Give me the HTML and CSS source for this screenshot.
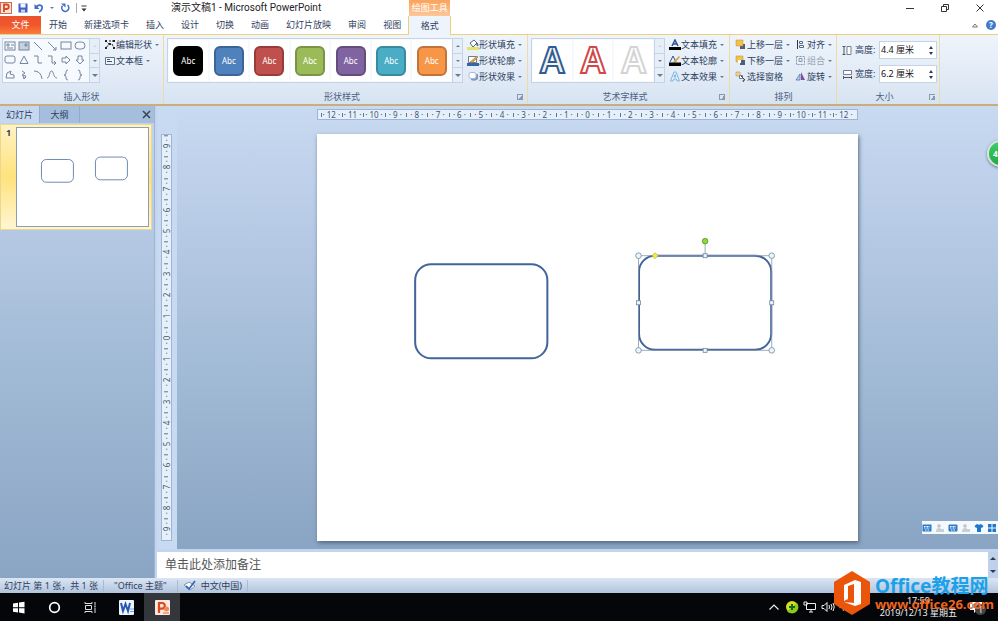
FILE: index.html
```
<!DOCTYPE html>
<html lang="zh-CN">
<head>
    <meta charset="UTF-8">
    <meta name="viewport" content="width=device-width, initial-scale=1.0">
    <title>演示文稿1 - Microsoft PowerPoint</title>
    <link rel="stylesheet" href="styles.css">
</head>
<body>

<header class="titlebar">
    <div class="quick-access">
        <svg class="app-logo" width="12" height="12" viewBox="0 0 12 12"><rect x="0.5" y="0.5" width="11" height="11" fill="#fbe3d8" stroke="#d9694a"/><path d="M4 10V2.5h2.5a2 2 0 0 1 0 4.500H4" fill="none" stroke="#d24a26" stroke-width="1.8"/></svg>
        <button aria-label="保存"><svg width="10" height="10" viewBox="0 0 10 10"><path d="M0.500 0.500h9v9h-9z" fill="#3f5fc4"/><path d="M2.500 0.500h5v4h-5z" fill="#f4f7ff"/><path d="M3 6.500h4v3H3z" fill="#c4d0f0"/></svg></button>
        <button aria-label="撤消"><svg width="10" height="10" viewBox="0 0 10 10"><path d="M2 4C5 1 9 2 8 5.500Q7.500 8 5 9" fill="none" stroke="#3f6fc8" stroke-width="1.800"/><path d="M0.500 1v5h5z" fill="#3f6fc8"/></svg></button>
        <span class="caret"></span>
        <button aria-label="重复"><svg width="10" height="10" viewBox="0 0 10 10"><path d="M7.500 2.200A3.500 3.500 0 1 1 2.500 2.800" fill="none" stroke="#3f6fc8" stroke-width="1.600"/><path d="M1 0.500h4.500v4z" fill="#3f6fc8"/></svg></button>
        <span class="divider"></span>
        <button aria-label="自定义快速访问工具栏"><svg width="6" height="7" viewBox="0 0 6 7"><path d="M0.500 1h5" stroke="#333"/><path d="M0.500 3.500h5L3 6.500z" fill="#333"/></svg></button>
    </div>
    <h1>演示文稿1 - Microsoft PowerPoint</h1>
    <div class="window-buttons">
        <button aria-label="最小化"><svg width="10" height="10" viewBox="0 0 10 10"><path d="M1 5.500h8" stroke="#333"/></svg></button>
        <button aria-label="还原"><svg width="10" height="10" viewBox="0 0 10 10"><path d="M1.500 3.500h5v5h-5zM3.500 3V1.500h5v5H7" fill="none" stroke="#333"/></svg></button>
        <button aria-label="关闭"><svg width="10" height="10" viewBox="0 0 10 10"><path d="M1.500 1.500l7 7m0-7l-7 7" stroke="#333"/></svg></button>
    </div>
</header>

<nav class="tabs">
    <button class="file-tab">文件</button>
    <button>开始</button>
    <button>新建选项卡</button>
    <button>插入</button>
    <button>设计</button>
    <button>切换</button>
    <button>动画</button>
    <button>幻灯片放映</button>
    <button>审阅</button>
    <button>视图</button>
    <div class="context-tab">
        <span class="context-title">绘图工具</span>
        <button>格式</button>
    </div>
    <div class="tab-tools">
        <button aria-label="功能区最小化"><svg width="6" height="5" viewBox="0 0 6 5"><path d="M0.500 4L3 1l2.500 3z" fill="none" stroke="#777"/></svg></button>
        <button class="help" aria-label="帮助">?</button>
    </div>
</nav>

<section class="ribbon">
    <div class="group insert-group">
        <div class="group-body">
            <div class="gallery">
                <div class="shape-grid">
                    <svg viewBox="0 0 12 12"><rect x="1" y="2" width="10" height="8"/><path d="M3 4h2v2H3zM7 5h3M3 8h6"/></svg>
                    <svg viewBox="0 0 12 12"><rect x="1" y="2" width="10" height="8" fill="#c8d2df"/><path d="M7 4h2v2H7z"/></svg>
                    <svg viewBox="0 0 12 12"><path d="M2 2l8 8"/></svg>
                    <svg viewBox="0 0 12 12"><path d="M2 2l8 8M10 7v3H7"/></svg>
                    <svg viewBox="0 0 12 12"><rect x="1" y="2" width="10" height="7"/></svg>
                    <svg viewBox="0 0 12 12"><rect x="1" y="2" width="10" height="7" rx="3.500"/></svg>
                    <svg viewBox="0 0 12 12"><rect x="1" y="2" width="10" height="7" rx="2"/></svg>
                    <svg viewBox="0 0 12 12"><path d="M6 2l4 7.500H2z"/></svg>
                    <svg viewBox="0 0 12 12"><path d="M2 2h4v7h4"/></svg>
                    <svg viewBox="0 0 12 12"><path d="M2 2h4v7h4M8 7l2 2-2 2"/></svg>
                    <svg viewBox="0 0 12 12"><path d="M2 4h4V2l4 4-4 4V8H2z"/></svg>
                    <svg viewBox="0 0 12 12"><path d="M4 2h4v4h2l-4 4-4-4h2z"/></svg>
                    <svg viewBox="0 0 12 12"><path d="M2 9l1-5 4-2-1 3 4 1v3z"/></svg>
                    <svg viewBox="0 0 12 12"><path d="M4 2l3 2-3 2 4 1-2 3M8 8l-2 2-1-3"/></svg>
                    <svg viewBox="0 0 12 12"><path d="M2 2q7 0 8 8"/></svg>
                    <svg viewBox="0 0 12 12"><path d="M1 9C4 9 3 2 5.500 2S7 9 11 9"/></svg>
                    <svg viewBox="0 0 12 12"><path d="M8 1Q6 1 6 3v1q0 2-2 2 2 0 2 2v1q0 2 2 2"/></svg>
                    <svg viewBox="0 0 12 12"><path d="M4 1q2 0 2 2v1q0 2 2 2-2 0-2 2v1q0 2-2 2"/></svg>
                </div>
                <div class="gallery-scroll"><button class="off" aria-label="上一行"></button><button aria-label="下一行"></button><button class="more" aria-label="其他"></button></div>
            </div>
            <div class="commands">
                <button><svg width="12" height="11" viewBox="0 0 12 11"><path d="M2 2l3 3-3 4M5 2h5M8 5l2 4" stroke="#222" fill="none" stroke-dasharray="2 1"/><path d="M1 1h2v2H1zM9 1h2v2H9zM1 8h2v2H1zM9 8h2v2H9zM5 4h2v2H5z" fill="#222"/></svg>编辑形状<span class="caret"></span></button>
                <button><svg width="12" height="11" viewBox="0 0 12 11"><path d="M1.500 2.500h9v7h-9z" fill="#eef4fb" stroke="#61748e"/><path d="M3 4.500h3M3 6.500h5" stroke="#42556e"/></svg>文本框<span class="caret"></span></button>
            </div>
        </div>
        <footer><span>插入形状</span></footer>
    </div>

    <div class="group style-group">
        <div class="group-body">
            <div class="gallery">
                <div class="swatches">
                    <button class="black"><span>Abc</span></button>
                    <button class="blue"><span>Abc</span></button>
                    <button class="red"><span>Abc</span></button>
                    <button class="green"><span>Abc</span></button>
                    <button class="purple"><span>Abc</span></button>
                    <button class="teal"><span>Abc</span></button>
                    <button class="orange"><span>Abc</span></button>
                </div>
                <div class="gallery-scroll"><button aria-label="上一行"></button><button aria-label="下一行"></button><button class="more" aria-label="其他"></button></div>
            </div>
            <div class="commands">
                <button><svg width="12" height="11" viewBox="0 0 12 11"><path d="M3 4l4-3 3 3-4 4z" fill="#fff" stroke="#52657f"/><path d="M9 4q2 1 1.500 3" stroke="#3565ad" stroke-width="1.500" fill="none"/><path d="M0 8h12v3H0z" fill="#e4e26a"/></svg>形状填充<span class="caret"></span></button>
                <button><svg width="12" height="11" viewBox="0 0 12 11"><path d="M1.500 1.500h8v6h-8z" fill="#fff" stroke="#6e7f95"/><path d="M3 7l7-6 1 1-6 6z" fill="#e3a33a" stroke="#9c6a22" stroke-width="0.500"/><path d="M0 8h12v3H0z" fill="#3565ad"/></svg>形状轮廓<span class="caret"></span></button>
                <button><svg width="12" height="11" viewBox="0 0 12 11"><path d="M4 3h7v5q-3 3-7 1z" fill="#7f94c6"/><rect x="2" y="1.500" width="7" height="6" rx="2" fill="#fff" stroke="#a9bbd8"/></svg>形状效果<span class="caret"></span></button>
            </div>
        </div>
        <footer><span>形状样式</span><button class="launcher" aria-label="设置形状格式"></button></footer>
    </div>

    <div class="group wordart-group">
        <div class="group-body">
            <div class="gallery">
                <div class="letters">
                    <button class="letter-blue">A</button>
                    <button class="letter-red">A</button>
                    <button class="letter-white">A</button>
                </div>
                <div class="gallery-scroll"><button class="off" aria-label="上一行"></button><button aria-label="下一行"></button><button class="more" aria-label="其他"></button></div>
            </div>
            <div class="commands">
                <button><svg width="12" height="11" viewBox="0 0 12 11"><path d="M3 7l3-6 3 6M4 5h4" fill="none" stroke="#2d5190" stroke-width="1.500"/><path d="M0 8h12v3H0z" fill="#000"/></svg>文本填充<span class="caret"></span></button>
                <button><svg width="12" height="11" viewBox="0 0 12 11"><path d="M1 7l3-6 3 6" fill="none" stroke="#2d5190"/><path d="M4 7l6-6 1 1-5 6z" fill="#d9a23b"/><path d="M0 7.500h12V11H0z" fill="#000"/></svg>文本轮廓<span class="caret"></span></button>
                <button><svg width="12" height="11" viewBox="0 0 12 11"><path d="M1.500 10L5 1h2l3.500 9H8L7.500 8h-3L4 10zM5 6h2L6 3.500z" fill="#e6f4fd" stroke="#7fb4df"/></svg>文本效果<span class="caret"></span></button>
            </div>
        </div>
        <footer><span>艺术字样式</span><button class="launcher" aria-label="设置文本效果格式"></button></footer>
    </div>

    <div class="group arrange-group">
        <div class="group-body">
            <div class="commands">
                <button><svg width="12" height="11" viewBox="0 0 12 11"><path d="M5 5h5v5H5z" fill="#4f5d78"/><path d="M1 1h7v6H1z" fill="#f2c14e" stroke="#c48f2a" stroke-width="0.500"/></svg>上移一层<span class="caret"></span></button>
                <button><svg width="12" height="11" viewBox="0 0 12 11"><path d="M1 1h7v6H1z" fill="#f2c14e" stroke="#c48f2a" stroke-width="0.500"/><path d="M5 5h5v5H5z" fill="#4f5d78"/><path d="M3 5h3v3H3z" fill="#fff"/></svg>下移一层<span class="caret"></span></button>
                <button><svg width="12" height="11" viewBox="0 0 12 11"><path d="M1 1h4v4H1z" fill="#f2d48e" stroke="#a48442" stroke-width="0.500"/><path d="M4.500 4.500h3v3h-3z" fill="#fff" stroke="#68788f"/><path d="M6 5l4 4-2 .3.500 1.700" fill="none" stroke="#445"/></svg>选择窗格</button>
            </div>
            <div class="commands">
                <button><svg width="12" height="11" viewBox="0 0 12 11"><path d="M2.500 1v9" stroke="#333"/><path d="M4.500 2.500h3v2h-3zM4.500 6.500h4v2h-4z" fill="#fff" stroke="#556a8a"/></svg>对齐<span class="caret"></span></button>
                <button class="disabled"><svg width="12" height="11" viewBox="0 0 12 11"><path d="M1.500 1.500h8v8h-8z" fill="none" stroke="#8796ab" stroke-dasharray="2 1"/><path d="M4 3.500h3v3H4z" fill="none" stroke="#8796ab"/></svg>组合<span class="caret"></span></button>
                <button><svg width="12" height="11" viewBox="0 0 12 11"><path d="M1 9h4V3z" fill="#bcd1ec" stroke="#5573a3" stroke-width="0.800"/><path d="M6 9h4L6 1z" fill="#7c4fa0"/></svg>旋转<span class="caret"></span></button>
            </div>
        </div>
        <footer><span>排列</span></footer>
    </div>

    <div class="group size-group">
        <div class="group-body">
            <div class="size-row">
                <svg width="11" height="11" viewBox="0 0 11 11"><path d="M5 1.500h4v8H5z" fill="#fff" stroke="#6e7f95"/><path d="M2 1v9M0.500 1.500h3M0.500 9.500h3" stroke="#555"/></svg>
                <label for="height">高度:</label>
                <div class="spin"><input id="height" type="text" value="4.4 厘米"><span class="arrows"><button class="up" aria-label="增加高度"></button><button class="down" aria-label="减小高度"></button></span></div>
            </div>
            <div class="size-row">
                <svg width="11" height="11" viewBox="0 0 11 11"><path d="M1.500 1.500h8v4h-8z" fill="#fff" stroke="#6e7f95"/><path d="M1 8.500h9M1.500 7v3M9.500 7v3" stroke="#555"/></svg>
                <label for="width">宽度:</label>
                <div class="spin"><input id="width" type="text" value="6.2 厘米"><span class="arrows"><button class="up" aria-label="增加宽度"></button><button class="down" aria-label="减小宽度"></button></span></div>
            </div>
        </div>
        <footer><span>大小</span><button class="launcher" aria-label="大小和位置"></button></footer>
    </div>
</section>

<main class="workspace">
    <aside class="sidebar">
        <div class="side-tabs">
            <button class="active">幻灯片</button>
            <button>大纲</button>
            <button class="close" aria-label="关闭"><svg width="9" height="9" viewBox="0 0 9 9"><path d="M1 1l7 7m0-7L1 8" stroke="#3c4654" stroke-width="1.600"/></svg></button>
        </div>
        <div class="thumb">
            <span>1</span>
            <svg viewBox="0 0 541 406"><rect x="101" y="130" width="132" height="94" rx="20"/><rect x="324" y="120" width="132" height="94" rx="20"/></svg>
        </div>
    </aside>

    <div class="editor">
        <div class="stage">
            <div class="ruler-row"><div class="ruler ruler-h" id="ruler-h"></div></div>
            <div class="ruler ruler-v" id="ruler-v"></div>
            <div class="canvas">
                <svg class="slide" viewBox="0 0 541 406">
                    <g fill="none" stroke="#41659a" stroke-width="2">
                        <rect x="98" y="130" width="132" height="94" rx="16"/>
                        <rect x="321.500" y="121.500" width="132" height="94" rx="16"/>
                    </g>
                    <path d="M321 121.500h133v94.500H321zM387.500 121.500v-14" fill="none" stroke="#8796ab" stroke-width="0.800"/>
                    <g fill="#e9f6fb" stroke="#73879c" stroke-width="0.800">
                        <circle cx="321" cy="121.500" r="2.800"/>
                        <circle cx="454" cy="121.500" r="2.800"/>
                        <circle cx="321" cy="216" r="2.800"/>
                        <circle cx="454" cy="216" r="2.800"/>
                        <rect x="385.500" y="119.500" width="4" height="4"/>
                        <rect x="385.500" y="214" width="4" height="4"/>
                        <rect x="319" y="166.500" width="4" height="4"/>
                        <rect x="452" y="166.500" width="4" height="4"/>
                    </g>
                    <circle cx="387.500" cy="107" r="2.800" fill="#86e02c" stroke="#5c8f3c" stroke-width="0.800"/>
                    <path d="M337.500 118.500l3 3-3 3-3-3z" fill="#f5ee3c" stroke="#a89f3c" stroke-width="0.600"/>
                </svg>
            </div>
        </div>
        <div class="notes">
            <div class="notes-text">单击此处添加备注</div>
            <div class="notes-scroll"><button class="up" aria-label="向上滚动"></button><button class="down" aria-label="向下滚动"></button></div>
        </div>
    </div>

    <button class="ball">49</button>
    <div class="ime">
        <svg width="10" height="10" viewBox="0 0 10 10"><rect x="0.500" y="1.500" width="9" height="7" fill="#2a7cc8"/><path d="M2 3.500h6M2 5h6M3 7h4" stroke="#fff" stroke-dasharray="1 0.500"/></svg>
        <svg width="10" height="10" viewBox="0 0 10 10"><circle cx="4" cy="3" r="1.800" fill="#b9c4d2"/><path d="M1 9q0-4 3-4t3 4M6 6h3v3H6z" fill="#c6cfda"/></svg>
        <svg width="10" height="10" viewBox="0 0 10 10"><rect x="0.500" y="1.500" width="9" height="7" rx="1" fill="#2a7cc8"/><path d="M2 3.500h6M2 5h6M3 7h4" stroke="#fff" stroke-dasharray="1 0.500"/></svg>
        <svg width="10" height="10" viewBox="0 0 10 10"><circle cx="4" cy="3" r="1.800" fill="#b9c4d2"/><path d="M1 9q0-4 3-4t3 4M6 6h3v3H6z" fill="#c6cfda"/></svg>
        <svg width="10" height="10" viewBox="0 0 10 10"><path d="M3 1q2 1.500 4 0l2.500 2-1.500 2-1-.500V9H3V4.500L2 5 .500 3z" fill="#1b78cc"/></svg>
        <svg width="10" height="10" viewBox="0 0 10 10"><path d="M1 1h3.500v3.500H1zM5.500 1H9v3.500H5.500zM1 5.500h3.500V9H1zM5.500 5.500H9V9H5.500z" fill="#1b78cc"/></svg>
    </div>
</main>

<div class="statusbar">
    <span>幻灯片 第 1 张，共 1 张</span>
    <span>"Office 主题"</span>
    <span class="language"><svg width="13" height="12" viewBox="0 0 13 12"><path d="M1 5l5-3 6 4-5 4z" fill="#fff" stroke="#7f93b5"/><path d="M3 6l3 3 6-8" fill="none" stroke="#3e66b4" stroke-width="1.800"/></svg>中文(中国)</span>
</div>

<footer class="taskbar">
    <button aria-label="开始"><svg width="13" height="13" viewBox="0 0 13 13"><path d="M1 2.500l5-.700v4.400H1zM7 1.600l5.500-.800v5.400H7zM1 7.200h5v4.300l-5-.700zM7 7.200h5.500v5.200L7 11.600z" fill="#fff"/></svg></button>
    <button aria-label="Cortana"><svg width="13" height="13" viewBox="0 0 13 13"><circle cx="6.500" cy="6.500" r="4.800" fill="none" stroke="#fff" stroke-width="1.700"/></svg></button>
    <button aria-label="任务视图"><svg width="13" height="13" viewBox="0 0 13 13"><path d="M1 1v1.500h7V1M1 12v-1.500h7V12M1.500 4.500h6v4h-6zM11 1v3M11 6.500V12M10 5.200h2" fill="none" stroke="#ddd"/></svg></button>
    <button aria-label="Word"><svg width="17" height="17" viewBox="0 0 17 17"><rect x="1" y="1" width="15" height="15" rx="1" fill="#eef4fd"/><path d="M3 4l2 8 2.500-7L10 12l2-8" fill="none" stroke="#2358b0" stroke-width="2"/><path d="M12 10h4M12 12.500h4" stroke="#7ba0db"/></svg></button>
    <button class="running" aria-label="PowerPoint"><svg width="17" height="17" viewBox="0 0 17 17"><rect x="1" y="1" width="15" height="15" rx="1" fill="#fde9df"/><path d="M5 14V4h3a2.800 2.800 0 0 1 0 5.600H5" fill="none" stroke="#dc4a1c" stroke-width="2.200"/><circle cx="12.500" cy="10" r="2.500" fill="#f08a5a"/><path d="M9 14h6" stroke="#e0653a"/></svg></button>
    <div class="tray">
        <svg width="14" height="14" viewBox="0 0 14 14"><path d="M2.500 9.500L7 5l4.500 4.500" fill="none" stroke="#eee" stroke-width="1.200"/></svg>
        <svg width="14" height="14" viewBox="0 0 14 14"><circle cx="7" cy="7" r="6" fill="#d8df1c"/><path d="M2 11a6 6 0 0 0 10-8z" fill="#8cc81e"/><path d="M7 4v6M4 7h6" stroke="#14681c" stroke-width="2"/></svg>
        <svg width="14" height="14" viewBox="0 0 14 14"><path d="M3.500 3.500h9v6h-9zM8 10v2M6 12h4M1 2h3v3H1z" fill="#000" stroke="#eee"/></svg>
        <svg width="14" height="14" viewBox="0 0 14 14"><path d="M1 5.500h2l3-3v9l-3-3H1zM8 5q1 2 0 4M10 4q2 3 0 6M12 3q2.500 4 0 8" fill="none" stroke="#eee"/></svg>
        <span class="ime-mode">中</span>
        <time><span>17:59</span><span>2019/12/13 星期五</span></time>
        <button class="notice" aria-label="通知"><svg width="14" height="14" viewBox="0 0 14 14"><path d="M1 2h12v8H8l-3 3v-3H1z" fill="#fff"/><path d="M3 5h8M3 7h8" stroke="#444"/></svg><span>1</span></button>
    </div>
</footer>

<div class="watermark">
    <svg width="36" height="44" viewBox="0 0 36 44"><path d="M18 0l18 11v22L18 44 0 33V11z" fill="#ea5509"/><path d="M10 14l11-5 6 2v22l-6 2-11-4 10 1V13l-6 2v13l-4 2z" fill="#fff"/></svg>
    <div>
        <strong>Office教程网</strong>
        <a href="#">www.office26.com</a>
    </div>
</div>

<script>
    // numbers run down to zero in the middle and back up again
    function drawRuler(id, max) {
        const ruler = document.getElementById(id);
        for (let i = -max; i <= max; i++) {
            const cell = document.createElement('span');
            cell.innerText = Math.abs(i);
            ruler.appendChild(cell);
        }
    }

    drawRuler('ruler-h', 12);
    drawRuler('ruler-v', 9);
</script>

</body>
</html>
```
FILE: styles.css
```
* {
    box-sizing: border-box;
}

body {
    display: flex;
    flex-direction: column;
    min-height: 100vh;
    margin: 0;
    position: relative;
    overflow-x: hidden;
    background-color: #fff;
    color: #2f4160;
    font-family: "Noto Sans", "Noto Sans CJK SC", sans-serif;
    font-size: 9px;
    line-height: 12px;
}

button {
    margin: 0;
    padding: 0;
    border: 0;
    background: none;
    color: inherit;
    font: inherit;
    white-space: nowrap;
}

svg {
    display: block;
    flex: none;
}

.caret {
    flex: none;
    width: 3px;
    border: 2px solid transparent;
    border-top-color: #6c7b92;
    border-bottom: 0;
}

/* Title bar */
.titlebar {
    display: flex;
    align-items: center;
    height: 16px;
}

.quick-access {
    display: flex;
    align-items: center;
    gap: 6px;
    width: 171px;
    height: 14px;
}

.quick-access .divider {
    margin: 0 -2px 0 0;
}

.divider {
    width: 1px;
    height: 10px;
    background-color: #aaa;
}

.titlebar h1 {
    margin: 0;
    color: #222;
    font-family: Roboto, "Noto Sans CJK SC", sans-serif;
    font-size: 10px;
    font-weight: normal;
    line-height: 14px;
}

.window-buttons {
    display: flex;
    gap: 25px;
    margin-left: auto;
    padding-right: 13px;
}

/* Tabs */
.tabs {
    display: flex;
    align-items: stretch;
    gap: 17px;
    height: 19px;
    border-bottom: 1px solid #f0cf7c;
}

.tabs .file-tab {
    width: 41px;
    margin-right: -9px;
    background: linear-gradient(#e8532f, #f0572b 50%, #fa7c3c);
    color: #fff;
}

.context-tab {
    display: flex;
    position: relative;
    width: 43px;
    height: 19px;
    margin-left: -10px;
    border: 1px solid #f0cf7c;
    border-width: 0 1px;
    background-color: #eef4fb;
}

.context-tab button {
    flex: 1;
}

.context-title {
    position: absolute;
    right: 0;
    bottom: 100%;
    left: 0;
    height: 16px;
    background: linear-gradient(#fba35c, #fcc79a);
    color: #fff;
    line-height: 16px;
    text-align: center;
}

.tab-tools {
    display: flex;
    align-items: center;
    gap: 8px;
    margin-left: auto;
    padding-right: 2px;
}

.help {
    width: 10px;
    height: 10px;
    border-radius: 50%;
    background-color: #3f7ad0;
    color: #fff;
    font-size: 8px;
    font-weight: bold;
    line-height: 10px;
}

/* Ribbon */
.ribbon {
    display: flex;
    height: 71px;
    border-bottom: 2px solid #c9ae7c;
    background: linear-gradient(#eef4fb, #dfe9f5 70%, #d6e3f2);
}

.group {
    display: flex;
    flex-direction: column;
    justify-content: space-between;
    padding: 3px 2px 1px 3px;
    border-right: 1px solid #efd9a4;
}

.insert-group {
    width: 164px;
    padding-left: 2px;
}

.style-group {
    width: 364px;
}

.wordart-group {
    width: 202px;
}

.arrange-group {
    width: 107px;
}

.size-group {
    width: 103px;
}

.group-body {
    display: flex;
    gap: 4px;
}

.group footer {
    display: flex;
    align-items: center;
    color: #4c607f;
}

.group footer span {
    flex: 1;
    text-align: center;
}

.launcher {
    width: 6px;
    height: 6px;
    margin-right: 2px;
    border: 1px solid #8a99b0;
    border-width: 1px 0 0 1px;
    background: linear-gradient(135deg, transparent 50%, #8a99b0 50%);
}

.gallery {
    display: flex;
    height: 45px;
    border: 1px solid #c5d3e6;
    background-color: #f6f9fd;
}

.shape-grid {
    display: grid;
    grid-template-columns: repeat(6, 14px);
    align-content: space-around;
    justify-items: center;
    width: 86px;
}

.shape-grid svg {
    width: 12px;
    height: 12px;
    fill: none;
    stroke: #7586a0;
    stroke-width: 1;
}

.gallery-scroll {
    display: flex;
    flex-direction: column;
    width: 10px;
    border-left: 1px solid #c5d3e6;
}

.gallery-scroll button {
    display: flex;
    flex: 1;
    align-items: center;
    justify-content: center;
    background-color: #e6eef8;
}

.gallery-scroll button + button {
    border-top: 1px solid #c5d3e6;
}

.gallery-scroll button::after {
    content: "";
    border: 2px solid transparent;
    border-top-color: #6c7b92;
    border-bottom: 0;
}

.gallery-scroll button:first-child::after {
    border-top: 0;
    border-bottom: 2px solid #6c7b92;
}

.gallery-scroll .off::after {
    opacity: 0.2;
}

.gallery-scroll .more::after {
    border-width: 3px 3px 0;
}

.commands {
    display: flex;
    flex-direction: column;
    align-items: flex-start;
    gap: 3px;
}

.commands button {
    display: flex;
    align-items: center;
    height: 13px;
}

.commands .caret {
    margin-left: 3px;
}

.commands .disabled {
    color: #98a3b2;
}

.swatches {
    display: flex;
    width: 284px;
}

.swatches button {
    flex: 1;
    margin: 1px;
    background-color: #fff;
}

.swatches span {
    display: block;
    width: 30px;
    height: 30px;
    margin: auto;
    border: 2px solid #000;
    border-radius: 6px;
    background-color: #000;
    color: #fff;
    font-size: 8px;
    line-height: 26px;
}

.swatches .blue span {
    border-color: #3b6498;
    background-color: #4f81bd;
}

.swatches .red span {
    border-color: #993b39;
    background-color: #c0504d;
}

.swatches .green span {
    border-color: #7a9446;
    background-color: #9bbb59;
}

.swatches .purple span {
    border-color: #644d7e;
    background-color: #8064a2;
}

.swatches .teal span {
    border-color: #388a9e;
    background-color: #4bacc6;
}

.swatches .orange span {
    border-color: #c1743a;
    background-color: #f79646;
}

.letters {
    display: flex;
    width: 122px;
}

.letters button {
    flex: 1;
    margin: 1px;
    background-color: #fff;
    font-family: "Liberation Sans", sans-serif;
    font-size: 36px;
    font-weight: bold;
    line-height: 42px;
    -webkit-text-stroke: 2px #2b5c9e;
}

.letters .letter-blue {
    color: #f7f3e3;
}

.letters .letter-red {
    color: #fff;
    -webkit-text-stroke-color: #d04848;
}

.letters .letter-white {
    color: #fff;
    -webkit-text-stroke-color: #d4d4d4;
}

.arrange-group .commands:first-child {
    width: 56px;
}

.arrange-group .group-body {
    padding-left: 2px;
}

.size-group .group-body {
    flex-direction: column;
    gap: 6px;
    padding-top: 3px;
}

.size-group .size-row {
    display: flex;
    align-items: center;
    gap: 2px;
    padding-left: 2px;
}

.spin {
    display: flex;
    width: 58px;
    height: 18px;
    margin-left: auto;
    border: 1px solid #c5d3e6;
    background-color: #fff;
}

.spin input {
    flex: 1;
    min-width: 0;
    padding: 0 1px;
    border: 0;
    background: none;
    color: #111;
    font: inherit;
}

.arrows {
    display: flex;
    flex-direction: column;
    align-items: center;
    justify-content: center;
    gap: 3px;
    width: 10px;
}

.up,
.down {
    width: 0;
    height: 0;
    border: 3px solid transparent;
}

.up {
    border-top: 0;
    border-bottom-color: #2c3a52;
}

.down {
    border-bottom: 0;
    border-top-color: #2c3a52;
}

.spin .up,
.spin .down {
    border-right-width: 2px;
    border-left-width: 2px;
}

/* Slides and editor */
.workspace {
    display: flex;
    flex: 1;
    position: relative;
    background-color: #c3d5ee;
}

.sidebar {
    width: 155px;
    border-right: 1px solid #9fb5d3;
    background: linear-gradient(#c3d5ee, #b4c8e3 28%, #a1bad5 55%, #8aa4c4);
}

.side-tabs {
    display: flex;
    height: 17px;
    background-color: #a5bedd;
}

.side-tabs button {
    width: 40px;
    border-right: 1px solid #8fabd0;
}

.side-tabs .active {
    background-color: #c6d8ef;
}

.side-tabs .close {
    width: auto;
    margin-left: auto;
    padding-right: 3px;
    border: 0;
}

.thumb {
    display: flex;
    margin: 1px 2px 0 0;
    padding: 2px;
    border: 1px solid #ecd88a;
    background: linear-gradient(#fff3c4, #ffe27c 50%, #fff6d4);
}

.thumb span {
    width: 13px;
    padding-left: 3px;
    font-weight: bold;
}

.thumb svg {
    flex: 1;
    min-width: 0;
    border: 1px solid #8e9db3;
    background-color: #fff;
    fill: none;
    stroke: #6a86ae;
    stroke-width: 4;
}

.editor {
    display: flex;
    flex: 1;
    flex-direction: column;
    min-width: 0;
    margin-left: 2px;
}

.stage {
    display: grid;
    flex: 1;
    grid-template-columns: 20px 1fr;
    grid-template-rows: 28px auto 1fr;
    background:
        linear-gradient(#c8daf1, #c8daf1) left / 20px 100% no-repeat,
        linear-gradient(#c8daf1, #b6c9e4 30%, #a1bad5 60%, #8aa4c4);
}

.ruler-row {
    grid-column: 2;
    padding-top: 3px;
}

.ruler {
    display: flex;
    border: 1px solid #9fb5d3;
    background-color: #e6f0fa;
    color: #42566f;
    font-size: 8px;
    line-height: 9px;
}

.ruler span {
    flex: 1;
    min-width: 0;
    text-align: center;
}

.ruler span::before {
    content: "· ";
}

.ruler span::after {
    content: " ·";
}

.ruler-h {
    width: 66%;
    height: 11px;
    margin: 0 auto;
    padding: 0 3px;
}

.ruler-h span {
    background: linear-gradient(#62748e, #62748e) left center / 1px 4px no-repeat;
}

.ruler-v {
    flex-direction: column;
    width: 11px;
    margin-left: 4px;
}

.ruler-v span {
    display: flex;
    align-items: center;
    justify-content: center;
    gap: 2px;
    writing-mode: vertical-rl;
    transform: rotate(180deg);
    background: linear-gradient(#62748e, #62748e) center bottom / 4px 1px no-repeat;
}

.slide {
    width: 66%;
    height: auto;
    margin: 0 auto;
    background-color: #fff;
    box-shadow: 1px 2px 4px #55697f;
}

.notes {
    display: flex;
    height: 29px;
    border-top: 3px solid #c3d5ee;
    background-color: #fff;
}

.notes-text {
    flex: 1;
    padding: 4px 8px;
    color: #555;
    font-family: "Liberation Serif", "Noto Sans CJK SC", serif;
    font-size: 12px;
    line-height: 18px;
}

.notes-scroll {
    display: flex;
    flex-direction: column;
    align-items: center;
    justify-content: space-around;
    width: 10px;
    background-color: #bfd1ea;
}

.ball {
    position: absolute;
    top: 34px;
    right: -16px;
    width: 27px;
    height: 27px;
    padding-right: 6px;
    border: 2px solid #d5e3dc;
    border-radius: 50%;
    background: linear-gradient(#3fcf66, #22a845);
    box-shadow: 0 1px 3px #66788c;
    color: #fff;
    font-size: 8px;
    font-weight: bold;
}

.ime {
    display: flex;
    position: absolute;
    right: 0;
    bottom: 44px;
    align-items: center;
    gap: 3px;
    height: 13px;
    padding-right: 1px;
    background-color: #f5f8fc;
}

/* Bottom bars */
.statusbar {
    display: flex;
    align-items: center;
    height: 15px;
    background: linear-gradient(#dbe6f4, #b1c3dc);
}

.statusbar span {
    display: flex;
    align-items: center;
    gap: 5px;
    padding: 0 10px;
    border-right: 1px solid #a9bbd4;
}

.statusbar span:first-child {
    padding: 0 5px 0 4px;
}

.statusbar .language {
    padding: 0 5px;
}

.taskbar {
    display: flex;
    height: 28px;
    background-color: #04060a;
    color: #eee;
}

.taskbar > button {
    display: flex;
    align-items: center;
    justify-content: center;
    width: 36px;
}

.taskbar > .running {
    background-color: #33373c;
}

.tray {
    display: flex;
    align-items: center;
    gap: 4px;
    margin-left: auto;
    padding-right: 15px;
}

.ime-mode {
    width: 37px;
}

.tray time {
    display: flex;
    flex-direction: column;
    align-items: center;
}

.notice {
    position: relative;
    margin-left: 8px;
}

.notice span {
    position: absolute;
    top: 4px;
    left: 6px;
    width: 11px;
    height: 11px;
    border-radius: 50%;
    background-color: #444;
    line-height: 11px;
}

.watermark {
    display: flex;
    position: absolute;
    right: 4px;
    bottom: 6px;
    gap: 5px;
}

.watermark div {
    display: flex;
    flex-direction: column;
    padding-top: 5px;
}

.watermark strong {
    color: #1ba1ea;
    font-size: 19px;
    line-height: 21px;
}

.watermark a {
    color: #f0641e;
    font-size: 13px;
    font-weight: bold;
    line-height: 14px;
    text-decoration: none;
}
```
